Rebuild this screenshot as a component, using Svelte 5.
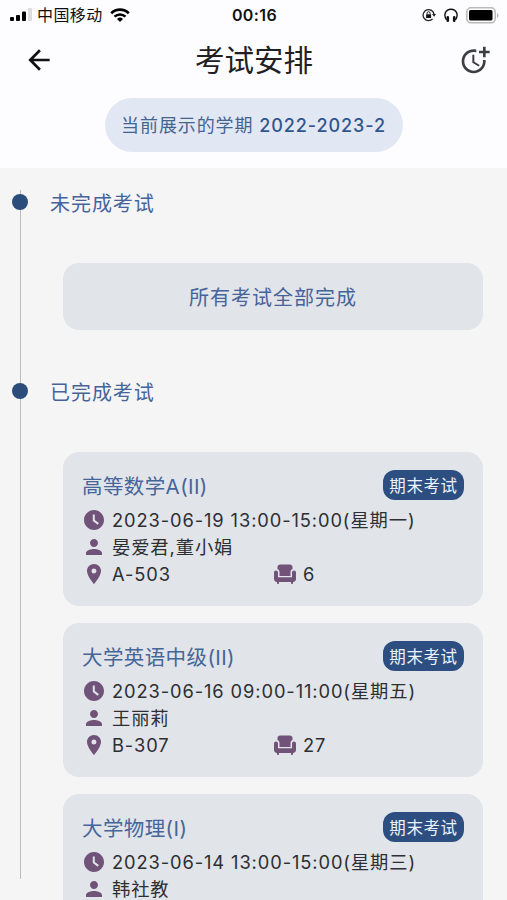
<script lang="ts">
	const term = '2022-2023-2';

	const exams = [
		{
			name: '高等数学A(II)',
			type: '期末考试',
			time: '2023-06-19 13:00-15:00(星期一)',
			teacher: '晏爱君,董小娟',
			room: 'A-503',
			seat: '6'
		},
		{
			name: '大学英语中级(II)',
			type: '期末考试',
			time: '2023-06-16 09:00-11:00(星期五)',
			teacher: '王丽莉',
			room: 'B-307',
			seat: '27'
		},
		{
			name: '大学物理(I)',
			type: '期末考试',
			time: '2023-06-14 13:00-15:00(星期三)',
			teacher: '韩社教',
			room: '',
			seat: ''
		}
	];
</script>

<div class="screen">
	<header>
		<div class="status-bar">
			<div class="carrier">
				<svg width="23" height="14" viewBox="0 0 23 14">
					<rect x="0" y="9" width="4" height="4" rx="1" />
					<rect x="6" y="7" width="4" height="6" rx="1" />
					<rect x="12" y="3.5" width="4" height="9.5" rx="1" />
					<rect class="weak" x="18" y="0" width="4" height="13" rx="1" />
				</svg>
				<span>中国移动</span>
				<svg width="20" height="14" viewBox="0 0 20 14" fill="none" stroke="#000">
					<path d="M1.2 5.2a12.4 12.4 0 0 1 17.6 0" stroke-width="2.7" />
					<path d="M4.5 8.7a7.8 7.8 0 0 1 11 0" stroke-width="2.5" />
					<path d="M10 14l-3-3a4.3 4.3 0 0 1 6 0z" fill="#000" stroke="none" />
				</svg>
			</div>
			<span class="clock">00:16</span>
			<div class="indicators">
				<svg width="14" height="14" viewBox="0 0 14 14" fill="none" stroke="#222" stroke-width="1.3">
					<path d="M12.1 6.4A5.5 5.5 0 1 0 10.6 10.9" />
					<path d="M10 6h4l-1.8 2.8z" fill="#222" stroke="none" />
					<rect x="4.1" y="6.2" width="5" height="3.8" rx=".6" fill="#111" stroke="none" />
					<path d="M5.1 6.4V5.2a1.5 1.5 0 0 1 3 0v1.2" stroke-width="1" />
				</svg>
				<svg width="14" height="15" viewBox="0 0 14 15" fill="none" stroke="#111">
					<path d="M2.6 11.8C-1 6.8 1.6 1.2 7 1.2s8 5.6 4.4 10.6" stroke-width="1.4" />
					<path d="M3.8 9.4v3.4M10.2 9.4v3.4" stroke-width="2.6" stroke-linecap="round" />
				</svg>
				<svg width="33" height="17" viewBox="0 0 33 17">
					<rect x=".8" y=".8" width="28.4" height="15" rx="4" fill="none" stroke="#b9b9b9" stroke-width="1.5" />
					<rect x="3" y="3" width="23.5" height="10.6" rx="1.5" />
					<path d="M31 6v5q1.5-.8 1.5-2.5T31 6z" fill="#b9b9b9" />
				</svg>
			</div>
		</div>

		<div class="app-bar">
			<svg width="32" height="32" viewBox="0 0 24 24" fill="#111">
				<path d="M20 11H7.83l5.59-5.59L12 4l-8 8 8 8 1.41-1.41L7.83 13H20z" />
			</svg>
			<h1>考试安排</h1>
			<svg width="32" height="32" viewBox="0 0 24 24" fill="#3c3e43">
				<path d="M10 8v6l4.7 2.9.8-1.2-4-2.4V8z" />
				<path d="M17.92 12c.05.33.08.66.08 1 0 3.9-3.1 7-7 7s-7-3.1-7-7 3.1-7 7-7c.7 0 1.37.1 2 .29V4.23c-.64-.15-1.31-.23-2-.23-5 0-9 4-9 9s4 9 9 9 9-4 9-9c0-.34-.02-.67-.06-1z" />
				<path d="M20 5V2h-2v3h-3v2h3v3h2V7h3V5z" />
			</svg>
		</div>

		<div class="term">当前展示的学期 <b>{term}</b></div>
	</header>

	<main>
		<div class="rail"></div>
		<div class="timeline">
			<h2>未完成考试</h2>
			<div class="card empty">所有考试全部完成</div>
			<h2>已完成考试</h2>
			{#each exams as exam}
				<section class="card">
					<div class="card-head">
						<h3>{exam.name}</h3>
						<span class="badge">{exam.type}</span>
					</div>
					<div class="row">
						<svg viewBox="0 0 24 24">
							<path d="M12 2C6.5 2 2 6.5 2 12s4.5 10 10 10 10-4.5 10-10S17.5 2 12 2zm3.7 14.8L10.8 13V6.5h2v5.6l4.1 3z" />
						</svg>
						<span>{exam.time}</span>
					</div>
					<div class="row">
						<svg viewBox="0 0 24 24">
							<path d="M12 12c2.21 0 4-1.79 4-4s-1.79-4-4-4-4 1.79-4 4 1.79 4 4 4zm0 2c-2.67 0-8 1.34-8 4v2h16v-2c0-2.66-5.33-4-8-4z" />
						</svg>
						<span>{exam.teacher}</span>
					</div>
					<div class="row">
						<div class="row half">
							<svg viewBox="0 0 24 24">
								<path d="M12 2C8.13 2 5 5.13 5 9c0 5.25 7 13 7 13s7-7.75 7-13c0-3.87-3.13-7-7-7zm0 9.5a2.5 2.5 0 1 1 0-5 2.5 2.5 0 0 1 0 5z" />
							</svg>
							<span>{exam.room}</span>
						</div>
						<div class="row half">
							<svg viewBox="0 0 24 24">
								<path d="M6.5 10v4h11v-4c0-1.5.8-2.5 2-3V5c0-1.5-1.2-2.5-2.700-2.500H7.200C5.700 2.500 4.500 3.500 4.500 5v2c1.200.5 2 1.500 2 3z" />
								<path d="M21 8.500c-1.100 0-2 .9-2 2v4.800H5v-4.800c0-1.100-.9-2-2-2s-2 .9-2 2V17c0 1.650 1.350 3 3 3v1c0 .55.45 1 1 1s1-.45 1-1v-1h12v1c0 .55.45 1 1 1s1-.45 1-1v-1c1.650 0 3-1.350 3-3v-6.500c0-1.100-.9-2-2-2z" />
							</svg>
							<span>{exam.seat}</span>
						</div>
					</div>
				</section>
			{/each}
		</div>
	</main>
</div>

<style>
	:global(body) {
		overflow: hidden;
	}

	/* just under 400, so the CJK face falls to its lighter cut */
	.screen {
		width: 507px;
		height: 900px;
		overflow: hidden;
		background: #f5f5f5;
		color: #2d2f33;
		font-family: Inter, 'Noto Sans CJK SC', sans-serif;
		font-weight: 399;
		display: flex;
		flex-direction: column;
	}

	svg {
		flex: none;
	}

	header {
		height: 168px;
		flex: none;
		background: #fdfcff;
	}

	.status-bar {
		height: 30px;
		padding: 0 8px 0 10px;
		display: grid;
		grid-template-columns: 1fr auto 1fr;
		align-items: center;
		color: #111;
		font-size: 16px;
		line-height: 28px;
	}

	.carrier,
	.indicators {
		display: flex;
		align-items: center;
	}

	.carrier span {
		margin: 0 7px 0 4px;
		letter-spacing: 0.4px;
	}

	.weak {
		fill: #dcdcde;
	}

	.clock {
		font-weight: 600;
		letter-spacing: 0.4px;
	}

	.indicators {
		justify-content: flex-end;
		gap: 8px;
	}

	.app-bar {
		height: 60px;
		padding: 0 16px 0 23px;
		display: grid;
		grid-template-columns: 32px 1fr 32px;
		align-items: center;
	}

	h1,
	h2,
	h3 {
		margin: 0;
		font-weight: 399;
	}

	h1 {
		padding-right: 6px;
		font-size: 29.5px;
		line-height: 60px;
		text-align: center;
		color: #1f2023;
	}

	.term {
		width: 298px;
		height: 54px;
		margin: 8px auto 0;
		border-radius: 27px;
		background: #e2e8f3;
		color: #456391;
		font-size: 18px;
		letter-spacing: 0.9px;
		line-height: 56px;
		text-align: center;
		white-space: nowrap;
	}

	.term b {
		font-weight: 500;
		color: #31568d;
	}

	main {
		flex: 1;
		min-height: 0;
		display: flex;
	}

	.rail {
		width: 1px;
		height: 689px;
		margin: 22px 0 0 20px;
		flex: none;
		background: #bcbcbe;
	}

	.timeline {
		width: 462px;
		flex: none;
	}

	h2 {
		height: 26px;
		padding: 21px 0 48px 29px;
		display: flex;
		align-items: center;
		font-size: 20px;
		letter-spacing: 0.95px;
		color: #46639a;
	}

	/* dot centred on the rail */
	h2::before {
		content: '';
		width: 16px;
		height: 16px;
		margin: -1px 22px 0 -38px;
		border-radius: 50%;
		background: #2c4d7c;
	}

	.card {
		box-sizing: border-box;
		height: 154px;
		margin: 0 0 17px 42px;
		padding: 18px 19px;
		border-radius: 16px;
		background: #e1e4e8;
	}

	.empty {
		height: 67px;
		margin-bottom: 27px;
		padding: 0;
		font-size: 20px;
		letter-spacing: 1px;
		line-height: 71px;
		text-align: center;
		color: #46639a;
	}

	.card-head {
		height: 36px;
		display: flex;
		justify-content: space-between;
		align-items: flex-start;
	}

	h3 {
		font-size: 20.5px;
		letter-spacing: 0.4px;
		line-height: 34px;
		color: #46659b;
	}

	.badge {
		width: 81px;
		height: 30px;
		border-radius: 12px;
		background: #2c4e80;
		color: #eef3fb;
		font-size: 16.5px;
		letter-spacing: 0.6px;
		line-height: 32px;
		text-align: center;
	}

	.row {
		height: 27px;
		display: flex;
		align-items: center;
		font-size: 18.3px;
		letter-spacing: 0.9px;
		line-height: 26px;
		white-space: nowrap;
	}

	.row svg {
		width: 24px;
		height: 24px;
		margin-right: 6px;
		fill: #715379;
	}

	.half {
		width: 50%;
	}
</style>
